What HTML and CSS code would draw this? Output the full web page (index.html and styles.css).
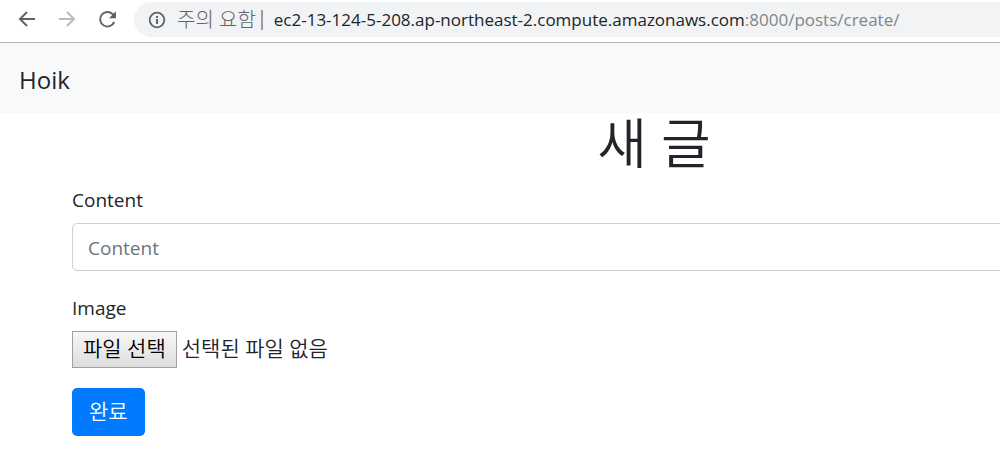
FILE: index.html
```html
<!DOCTYPE html>
<html lang="ko">
<head>
<meta charset="utf-8">
<title>새 글</title>
<link rel="stylesheet" href="styles.css">
</head>
<body>
<header class="toolbar">
  <button class="tool" type="button" aria-label="뒤로">
    <svg width="20" height="20" viewBox="0 0 20 20" fill="none" stroke="#5f6368" stroke-width="2"><path d="M18 9H3M10 2L3 9l7 7"/></svg>
  </button>
  <button class="tool" type="button" aria-label="앞으로" disabled>
    <svg width="20" height="20" viewBox="0 0 20 20" fill="none" stroke="#babcbe" stroke-width="2"><path d="M2 9h15M10 2l7 7-7 7"/></svg>
  </button>
  <button class="tool" type="button" aria-label="새로고침">
    <svg width="20" height="20" viewBox="0 0 20 20"><path d="M17.2 12A7.3 7.3 0 1 1 15.6 4L17 5.5" fill="none" stroke="#5f6368" stroke-width="2"/><path d="M19 1.2v7h-7z" fill="#5f6368"/></svg>
  </button>
  <div class="address">
    <svg width="18" height="18" viewBox="0 0 18 18"><circle cx="9" cy="9" r="7.3" fill="none" stroke="#5f6368" stroke-width="1.8"/><path d="M8 8h2v5H8zM8 5h2v2H8z" fill="#5f6368"/></svg>
    <span class="warning">주의 요함</span>
    <span class="divider"></span>
    <span class="url">ec2-13-124-5-208.ap-northeast-2.compute.amazonaws.com<span class="path">:8000/posts/create/</span></span>
  </div>
</header>
<nav class="navbar"><a class="brand" href="#">Hoik</a></nav>
<main class="container">
  <h1 class="title">새 글</h1>
  <form class="form">
    <div class="group">
      <label class="label" for="content">Content</label>
      <input class="control" id="content" type="text" placeholder="Content">
    </div>
    <div class="group">
      <label class="label" for="image">Image</label>
      <div class="file">
        <input class="file-input" id="image" type="file">
        <label class="file-button" for="image">파일 선택</label>
        <span class="file-name">선택된 파일 없음</span>
      </div>
    </div>
    <button class="submit" type="submit">완료</button>
  </form>
</main>
</body>
</html>
```
FILE: styles.css
```css
* { box-sizing: border-box; }
body {
  margin: 0;
  overflow: hidden;
  background: #fff;
  color: #212529;
  font-family: "Open Sans", "Noto Sans CJK KR", sans-serif;
  font-size: 19px;
  line-height: 30px;
}
.toolbar {
  display: flex;
  align-items: center;
  gap: 20px;
  padding: 2px 0 5px 17px;
  border-bottom: 1px solid #b2b3b5;
}
.tool {
  display: flex;
  padding: 0;
  border: 0;
  background: none;
}
.address {
  display: flex;
  flex: 1;
  align-items: center;
  height: 35px;
  margin-left: -3px;
  padding-left: 14px;
  border-radius: 18px 0 0 18px;
  background: #f1f3f4;
  font-size: 17px;
  white-space: nowrap;
}
.warning {
  margin-left: 11px;
  color: #5f6368;
  font-size: 20px;
  font-weight: 300;
}
.divider {
  width: 2px;
  height: 20px;
  margin: 0 11px 0 5px;
  background: #9b9da0;
}
.path { color: #80868b; }
.navbar {
  padding: 22px 19px 18px;
  background: #f8f9fa;
}
.brand {
  display: block;
  color: #212529;
  font-size: 24px;
  text-decoration: none;
}
.container { margin: 0 -236px 0 72px; }
.title {
  margin: 0 0 12px;
  font-size: 54px;
  font-weight: 350;
  line-height: 60px;
  text-align: center;
}
.group { margin-bottom: 20px; }
.label {
  display: block;
  margin-bottom: 8px;
}
.control {
  display: block;
  width: 100%;
  height: 48px;
  padding: 9px 15px 7px;
  border: 1px solid #ced0d2;
  border-radius: 5px;
  color: #495057;
  font: inherit;
}
.control::placeholder { color: #6c757d; }
.group + .group .label { padding-top: 2px; }
.file {
  display: flex;
  align-items: center;
  gap: 5px;
  font-size: 21px;
  font-weight: 350;
}
.file-input {
  position: absolute;
  width: 1px;
  height: 1px;
  opacity: 0;
}
.file-button,
.file-name {
  padding-top: 2px;
  padding-bottom: 5px;
  line-height: 28px;
}
.file-button {
  padding-right: 10px;
  padding-left: 10px;
  border: 1px solid #a0a0a0;
  background: linear-gradient(#f7f7f7, #dddddd);
  color: #000;
}
.submit {
  padding: 8px 17px 10px;
  border: 0;
  border-radius: 5px;
  background: #007bff;
  color: #fff;
  font: inherit;
  font-size: 21px;
  font-weight: 350;
}
```
